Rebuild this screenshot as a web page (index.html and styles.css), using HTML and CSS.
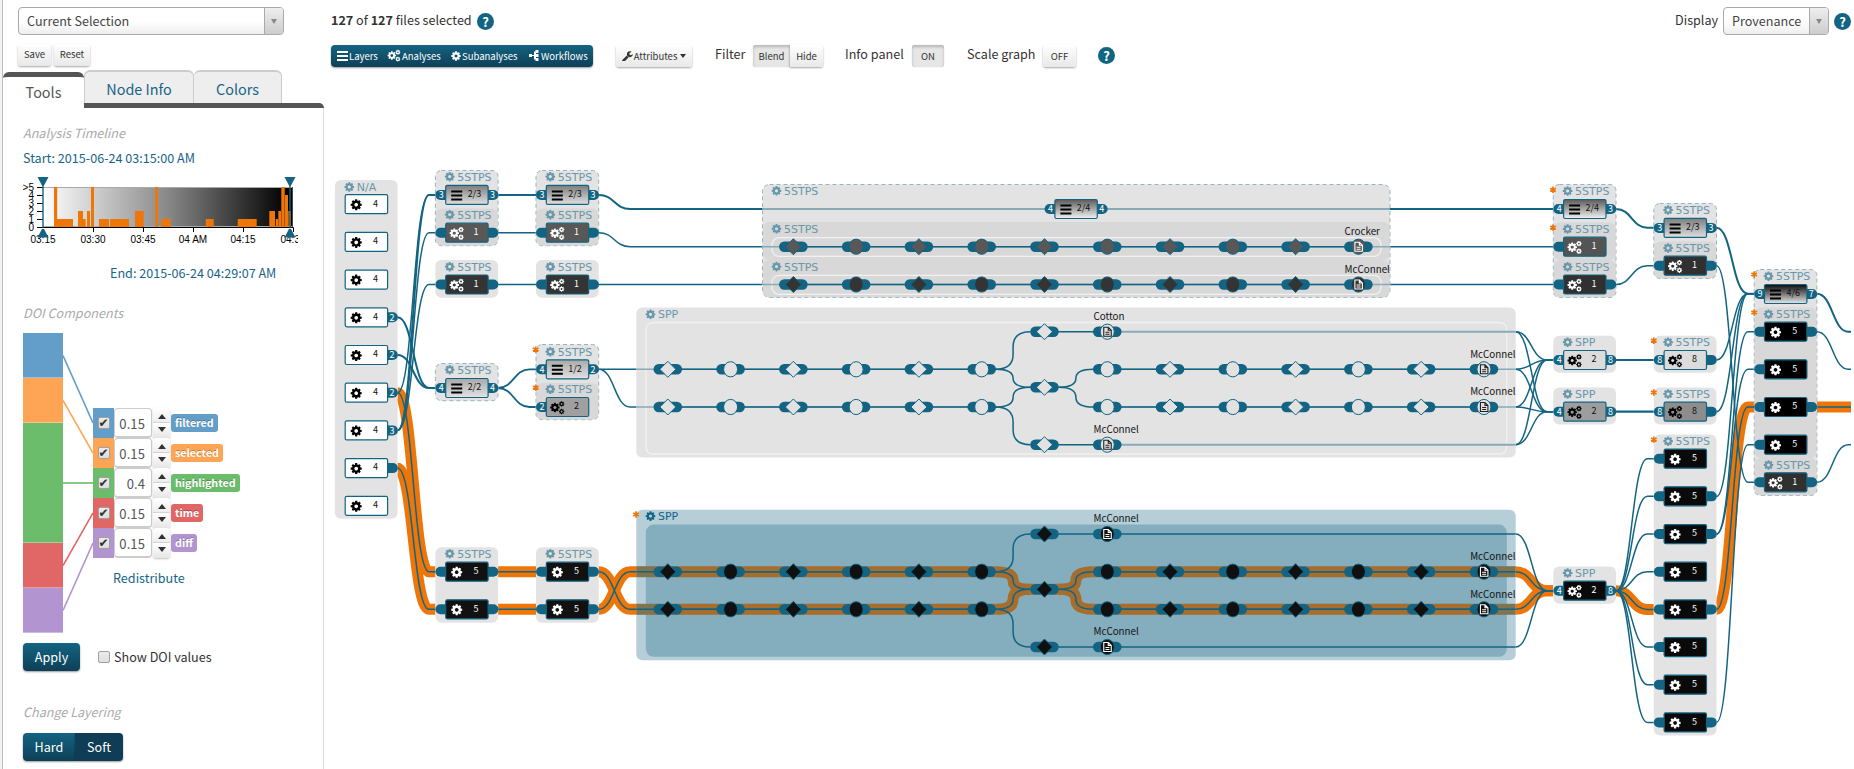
FILE: index.html
```html
<!DOCTYPE html>
<html lang="en">
<head>
<meta charset="utf-8">
<title>Provenance</title>
<link rel="stylesheet" href="styles.css">
</head>
<body>
<svg width="0" height="0" class="defs">
  <defs>
    <path id="cog" fill-rule="evenodd" transform="scale(.000651,-.000651) translate(-768,-640)" d="M1024 640q0 -106 -75 -181t-181 -75t-181 75t-75 181t75 181t181 75t181 -75t75 -181zM1536 749v-222q0 -12 -8 -23t-20 -13l-185 -28q-19 -54 -39 -91q35 -50 107 -138q10 -12 10 -25t-9 -23q-27 -37 -99 -108t-94 -71q-12 0 -26 9l-138 108q-44 -23 -91 -38q-16 -136 -29 -186q-7 -28 -36 -28h-222q-14 0 -24.5 8.5t-11.5 21.5l-28 184q-49 16 -90 37l-141 -107q-10 -9 -25 -9q-14 0 -25 11q-126 114 -165 168q-7 10 -7 23q0 12 8 23q15 21 51 66.5t54 70.5q-27 50 -41 99l-183 27q-13 2 -21 12.5t-8 23.5v222q0 12 8 23t19 13l186 28q14 46 39 92q-40 57 -107 138q-10 12 -10 24q0 10 9 23q26 36 98.5 107.5t94.5 71.5q13 0 26 -10l138 -107q44 23 91 38q16 136 29 186q7 28 36 28h222q14 0 24.5 -8.5t11.5 -21.5l28 -184q49 -16 90 -37l142 107q9 9 24 9q13 0 25 -10q129 -119 165 -170q7 -8 7 -22q0 -12 -8 -23q-15 -21 -51 -66.5t-54 -70.5q26 -50 41 -98l183 -28q13 -2 21 -12.5t8 -23.5z"/>
    <g id="cogs">
      <use href="#cog" transform="translate(-2.4,0) scale(9.4)"/>
      <use href="#cog" transform="translate(4.3,-3.6) scale(5.4)"/>
      <use href="#cog" transform="translate(4.3,4) scale(5.4)"/>
    </g>
    <path id="bars" d="M-5.5-5h11v2h-11zM-5.5-1h11v2h-11zM-5.5 3h11v2h-11z"/>
    <linearGradient id="g23" x2="0" y2="1"><stop offset="0" stop-color="#7d7d7d"/><stop offset="1" stop-color="#e0e0e0"/></linearGradient>
    <linearGradient id="g24" x2="0" y2="1"><stop offset="0" stop-color="#5a5a5a"/><stop offset="1" stop-color="#f2f2f2"/></linearGradient>
    <linearGradient id="g22" x2="0" y2="1"><stop offset="0" stop-color="#a8a8a8"/><stop offset="1" stop-color="#e2e2e2"/></linearGradient>
    <linearGradient id="g46" x2="0" y2="1"><stop offset="0" stop-color="#0a0a0a"/><stop offset="1" stop-color="#e6e6e6"/></linearGradient>
    <linearGradient id="gTime"><stop offset="0" stop-color="#fff"/><stop offset=".5" stop-color="#888"/><stop offset=".95" stop-color="#080808"/><stop offset="1" stop-color="#000"/></linearGradient>
  </defs>
</svg>
<div class="app">
  <aside class="sidebar">
    <div class="select sel-current"><span>Current Selection</span><i class="caret-box"></i></div>
    <div class="row saves"><button class="btn save">Save</button><button class="btn reset">Reset</button></div>
    <nav class="tabs"><a class="tab active">Tools</a><a class="tab info">Node Info</a><a class="tab colors">Colors</a></nav>
    <div class="panel">
      <h4 class="h-timeline">Analysis Timeline</h4>
      <div class="link start">Start: 2015-06-24 03:15:00 AM</div>
      <svg class="timeline" width="275" height="72" viewBox="23 176 275 72"></svg>
      <div class="link end">End: 2015-06-24 04:29:07 AM</div>
      <h4 class="h-doi">DOI Components</h4>
      <div class="doi">
        <div class="stack"><i class="c-filtered"></i><i class="c-selected"></i><i class="c-highlighted big"></i><i class="c-time"></i><i class="c-diff"></i></div>
        <svg class="links" width="30" height="300"><g stroke-width="1.6" fill="none">
          <path stroke="#639ec9" d="M0 22.5L30 90"/><path stroke="#fea555" d="M0 67.5L30 120"/><path stroke="#6bbc6b" d="M0 150H30"/><path stroke="#e16767" d="M0 232.5L30 180"/><path stroke="#b294d0" d="M0 277.5L30 210"/></g></svg>
        <div class="comps">
          <div class="comp"><i class="sw c-filtered"><b class="check ticked"></b></i><span class="num">0.15</span><i class="spin"></i><em class="tag c-filtered">filtered</em></div>
          <div class="comp"><i class="sw c-selected"><b class="check ticked"></b></i><span class="num">0.15</span><i class="spin"></i><em class="tag c-selected">selected</em></div>
          <div class="comp"><i class="sw c-highlighted"><b class="check ticked"></b></i><span class="num">0.4</span><i class="spin"></i><em class="tag c-highlighted">highlighted</em></div>
          <div class="comp"><i class="sw c-time"><b class="check ticked"></b></i><span class="num">0.15</span><i class="spin"></i><em class="tag c-time">time</em></div>
          <div class="comp"><i class="sw c-diff"><b class="check ticked"></b></i><span class="num">0.15</span><i class="spin"></i><em class="tag c-diff">diff</em></div>
          <div class="link redis">Redistribute</div>
        </div>
      </div>
      <div class="row apply-row"><button class="pbtn apply">Apply</button><b class="check"></b><span>Show DOI values</span></div>
      <h4 class="h-layer">Change Layering</h4>
      <div class="row"><button class="pbtn hard">Hard</button><button class="pbtn soft">Soft</button></div>
    </div>
  </aside>
  <main class="main">
    <div class="row top">
      <span class="count"><b>127</b> of <b>127</b> files selected</span><i class="help">?</i>
      <span class="display">Display</span>
      <div class="select sel-prov"><span>Provenance</span><i class="caret-box"></i></div><i class="help h-end">?</i>
    </div>
    <div class="row tools">
      <div class="levels">
        <span class="lv1"><svg width="11" height="10" viewBox="-5.5 -5 11 10"><use href="#bars"/></svg>Layers</span>
        <span class="lv2"><svg width="14" height="13" viewBox="-7 -6.5 14 13"><use href="#cogs" transform="scale(.9)"/></svg>Analyses</span>
        <span class="lv3"><svg width="10" height="10" viewBox="-5 -5 10 10"><use href="#cog" transform="scale(9.4)"/></svg>Subanalyses</span>
        <span class="lv4"><svg width="11" height="11" viewBox="0 0 11 11"><path d="M0 4h3v3H0zM3 5h3v1H3zM5 1.5h2v8H5zM6.5 0H9.5v3H6.5zM6.5 4H9.5v3H6.5zM6.5 8H9.5v3H6.5z"/></svg>Workflows</span>
      </div>
      <button class="btn attr"><svg width="11" height="11" viewBox="0 -1536 1664 1664"><path transform="scale(1,-1)" d="M1018 428l-682 -682q-37 -37 -90 -37q-52 0 -91 37l-106 108q-38 36 -38 90q0 53 38 91l681 681q39 -98 114.500 -173.500t173.500 -114.500zM1634 863q0 -39 -23 -106q-47 -134 -164.500 -217.500t-258.500 -83.500q-185 0 -316.500 131.500t-131.500 316.500t131.500 316.500t316.500 131.500q58 0 121.500 -16.500t107.500 -46.500q16 -11 16 -28t-16 -28l-293 -169v-224l193 -107q5 3 79 48.500t135.500 81t70.500 35.500q15 0 23.500 -10t8.500 -25z"/></svg>Attributes<i class="down"></i></button>
      <span class="t-filter">Filter</span><button class="btn blend pressed">Blend</button><button class="btn hide">Hide</button>
      <span class="t-info">Info panel</span><button class="btn on pressed">ON</button>
      <span class="t-scale">Scale graph</span><button class="btn off">OFF</button>
      <i class="help h-tools">?</i>
    </div>
    <svg class="graph" width="1527" height="689" viewBox="324 80 1527 689"></svg>
  </main>
</div>
<script src="graph.js"></script>
</body>
</html>
```

FILE: styles.css
```css
* { box-sizing: border-box; }
body { margin: 0; background: #fff; color: #333; font: 12.6px/18px "Noto Sans CJK JP", "Noto Sans", sans-serif; overflow: hidden; }
.defs { position: absolute; }
.app { display: flex; width: 1854px; height: 769px; background: linear-gradient(90deg, #f3f3f3 0 2px, #bbb 2px 3px, #fff 3px); }
.sidebar { width: 324px; height: 769px; padding: 7px 0 0 3px; display: flex; flex-direction: column; }
.row { display: flex; align-items: center; }
i, em { font-style: normal; }
button { font-family: inherit; padding: 0; margin: 0; border: 0; }
.select { display: flex; height: 28px; border: 1px solid #aaa; border-radius: 4px; background: linear-gradient(#fff 50%, #eee); color: #444; line-height: 25px; flex: none; }
.select span { flex: 1; padding-left: 8px; white-space: nowrap; }
.caret-box { width: 19px; border-left: 1px solid #aaa; border-radius: 0 3px 3px 0; background: linear-gradient(#eee, #ccc); display: flex; align-items: center; justify-content: center; }
.caret-box::before { content: ""; border: 3px solid transparent; border-top: 5px solid #888; border-bottom: 0; }
.sel-current { width: 266px; margin-left: 15px; }
.saves { margin: 8px 0 0 15px; gap: 3px; height: 23px; }
.btn { height: 22px; border-radius: 3px; background: linear-gradient(#fff, #e8e8e8); box-shadow: 0 1px 2px rgba(0,0,0,.35); color: #333; font-size: 9.5px; line-height: 20px; text-align: center; flex: none; white-space: nowrap; }
.btn.pressed { background: #e6e6e6; box-shadow: inset 0 2px 3px rgba(0,0,0,.2), 0 0 1px rgba(0,0,0,.3); }
.saves .btn { padding-bottom: 2px; }
.save { width: 33px; } .reset { width: 36px; }
.tabs { display: flex; height: 42px; align-items: flex-end; position: relative; }
.tabs::after { content: ""; position: absolute; left: 81px; top: 37px; width: 240px; height: 5px; background: #555; border-radius: 0 5px 0 0; }
.tab { font-size: 14.4px; text-align: center; color: #186487; background: #eee; border: 1px solid #ccc; border-bottom: 0; border-top-width: 2px; border-radius: 6px 6px 0 0; height: 33px; margin-bottom: 5px; line-height: 33px; }
.tab.active { width: 81px; height: 36px; margin-bottom: 0; background: #fff; border: 0; border-top: 5px solid #555; color: #555; line-height: 29px; }
.tab.info { width: 110px; } .tab.colors { width: 88px; border-left: 0; }
.panel { width: 321px; flex: 1; border-right: 1px solid #ddd; padding-left: 20px; }
h4 { margin: 0; font-size: 12.6px; font-weight: 400; font-style: italic; color: #aaa; line-height: 18px; }
.h-timeline { padding-top: 16px; }
.link { color: #186487; }
.start { margin-top: 7px; }
.timeline { display: block; margin-top: 8px; }
.end { margin-top: 17px; padding-left: 87px; }
.h-doi { margin-top: 22px; }
.doi { display: flex; margin-top: 11px; height: 300px; }
.stack { width: 40px; display: flex; flex-direction: column; }
.stack i { height: 45px; border-bottom: 1px solid rgba(255,255,255,.35); }
.stack .big { height: 120px; }
.c-filtered { background: #639ec9; } .c-selected { background: #fea555; } .c-highlighted { background: #6bbc6b; } .c-time { background: #e16767; } .c-diff { background: #b294d0; }
.comps { padding-top: 75px; }
.comp { display: flex; height: 30px; align-items: center; }
.sw { width: 21px; height: 30px; display: flex; align-items: center; justify-content: center; }
.check { width: 12px; height: 12px; border: 1px solid #a0a0a0; border-radius: 2px; background: linear-gradient(#ececec, #ddd); display: block; flex: none; }
.check.ticked::before { content: "✔"; display: block; font: 12px/10px "DejaVu Sans", sans-serif; color: #333; margin-left: 0; }
.num { width: 38px; height: 30px; border: 1px solid #ccc; border-bottom-width: 2px; border-radius: 4px; background: #fff; text-align: right; padding-right: 6px; line-height: 29px; font-size: 13px; color: #555; letter-spacing: .1px; }
.spin { width: 17px; height: 30px; margin: 0 1px; border-radius: 3px; box-shadow: 0 1px 2px rgba(0,0,0,.25); background: linear-gradient(#fff, #eee 46%, #ccc 48%, #fff 50%, #e6e6e6); display: flex; flex-direction: column; align-items: center; justify-content: center; gap: 8px; }
.spin::before, .spin::after { content: ""; border: 4px solid transparent; border-top: 0; border-bottom: 5px solid #333; }
.spin::after { border-top: 5px solid #333; border-bottom: 0; }
.tag { height: 18px; padding: 0 4px; border-radius: 3px; color: #fff; font-weight: 700; font-size: 10.7px; line-height: 17px; text-shadow: 0 -1px 0 rgba(0,0,0,.25); }
.redis { padding: 11px 0 0 20px; }
.pbtn { height: 28px; color: #fff; font-size: 12.6px; line-height: 28px; background: linear-gradient(#136482, #0e3f57); box-shadow: 0 1px 2px rgba(0,0,0,.4); }
.apply-row { margin-top: 10px; }
.apply { width: 57px; border-radius: 4px; margin-right: 18px; }
.apply-row span { margin-left: 4px; }
.h-layer { margin: 32px 0 12px; }
.hard { width: 52px; border-radius: 4px 0 0 4px; }
.soft { width: 48px; border-radius: 0 4px 4px 0; background: #0f3d56; }
.main { width: 1530px; }
.top { height: 42px; padding-left: 7px; }
.top > span { white-space: nowrap; line-height: 18px; margin-top: -2px; }
.count { width: 146px; }
.help { width: 17px; height: 17px; border-radius: 50%; background: #136482; color: #fff; font-weight: 700; font-size: 13px; line-height: 17px; text-align: center; flex: none; }
.display { width: 48px; margin-left: 1181px; }
.sel-prov { width: 106px; }
.sel-prov + .help { margin-left: 5px; }
.tools { height: 27px; padding: 0 0 0 7px; margin-bottom: 11px; }
.tools > span { line-height: 18px; white-space: nowrap; margin-top: -4px; flex: none; }
.levels { width: 262px; height: 22px; border-radius: 4px; background: linear-gradient(#136482, #0e3f57); box-shadow: 0 1px 2px rgba(0,0,0,.4); display: flex; color: #fff; font-size: 9.5px; line-height: 20px; flex: none; }
.levels span { display: flex; align-items: center; gap: 1px; padding-left: 6px; white-space: nowrap; }
.levels svg { fill: #fff; flex: none; }
.lv1 { width: 50px; } .lv2 { width: 64px; } .lv3 { width: 78px; } .lv4 { width: 70px; }
.attr { width: 76px; margin-left: 23px; display: flex; align-items: center; justify-content: center; gap: 1px; }
.attr svg { fill: #333; }
.down { border: 3.5px solid transparent; border-top: 4px solid #333; border-bottom: 0; margin-left: 2px; }
.t-filter { width: 38px; margin-left: 23px; }
.blend { width: 37px; border-radius: 3px 0 0 3px; } .hide { width: 33px; border-radius: 0 3px 3px 0; }
.t-info { width: 67px; margin-left: 22px; } .on { width: 32px; }
.t-scale { width: 76px; margin-left: 23px; } .off { width: 33px; }
.h-tools { margin-left: 22px; }
.graph { display: block; }
.graph .lbl { font: 11px "DejaVu Sans", sans-serif; fill: #6797ab; }
.graph .sel { fill: #136482; }
.graph .cnt { font-size: 9px; text-anchor: middle; }
.graph .port { font-size: 9px; fill: #fff; text-anchor: middle; }
.graph .name { font-size: 9.8px; fill: #111; }
.timeline text { font: 10px "Liberation Sans", sans-serif; fill: #000; }
```

FILE: graph.js
```js
const TEAL = '#136482', ORANGE = '#ee7608', FAINT = '#88aab8';
const out = [];
const put = s => out.push(s);
const C = { a: 334.9, b: 435.4, c: 536, x: 1553.3, y: 1653.8, z: 1754.2 };
const W = 62.7;

function link(x0, y0, x1, y1, w) {
  const m = x0 + 15.7, e = Math.min(x0 + 31.4, x1);
  return { d: `M${x0} ${y0}C${m} ${y0} ${m} ${y1} ${e} ${y1}H${x1}`, w: w || 1.5 };
}
const R = c => c + W;
const edges = [
  link(R(C.a), 317.3, C.b, 388, 2), link(R(C.a), 355, C.b, 388, 2),
  link(R(C.a), 430.3, C.b, 194.9, 2), link(R(C.a), 430.3, C.b, 232.7), link(R(C.a), 430.3, C.b, 284.5),
  link(R(C.a), 392.7, C.b, 194.9),
  link(R(C.b), 194.9, C.c, 194.9, 2), link(R(C.b), 232.7, C.c, 232.7), link(R(C.b), 284.5, C.c, 284.5),
  link(R(C.b), 388, C.c, 369.3, 1.8), link(R(C.b), 388, C.c, 407, 1.8),
  link(R(C.c), 194.9, 1553, 209, 2), link(R(C.c), 232.7, 1553, 246.7), link(R(C.c), 284.5, 1553, 284.5),
  link(R(C.c), 369.3, 660, 369.3), link(R(C.c), 369.3, 660, 407),
  link(R(C.x), 209, C.y, 227.7, 2), link(R(C.x), 284.5, C.y, 265.7),
  link(R(C.x), 360, C.y, 360, 2), link(R(C.x), 411.7, C.y, 411.7, 2.2),
  link(R(C.y), 227.7, C.z, 293.7, 2), link(R(C.y), 265.7, C.z, 482.3),
  link(R(C.y), 360, C.z, 293.7), link(R(C.y), 411.7, C.z, 293.7),
  link(R(C.y), 496.5, C.z, 293.7), link(R(C.y), 534.2, C.z, 331.7), link(R(C.y), 534.2, C.z, 369.3),
  link(R(C.y), 722.4, C.z, 444.7),
  link(R(C.z), 293.7, 1851, 331.7, 2), link(R(C.z), 331.7, 1851, 369.3), link(R(C.z), 482.3, 1851, 444.7)
];
for (const y of [331.7, 369.3, 407, 444.7]) {
  for (const t of [360, 411.7]) edges.push(link(1515.7, y, 1553, t));
}
for (const y of [534, 647]) edges.push(link(1515.7, y, 1553, 590.7));
for (let i = 0; i < 8; i++) if (i !== 4) edges.push(link(R(C.x), 590.7, C.y, 458.7 + 37.67 * i));
const hot = [
  link(R(C.a), 392.7, C.b, 571.7), link(R(C.a), 468.3, C.b, 609.3),
  link(R(C.b), 571.7, C.c, 571.7), link(R(C.b), 609.3, C.c, 609.3),
  link(R(C.c), 571.7, 637, 609.3), link(R(C.c), 609.3, 637, 571.7),
  link(1515.7, 571.7, 1553, 590.7), link(1515.7, 609.3, 1553, 590.7),
  link(R(C.x), 590.7, C.y, 609.4), link(R(C.y), 609.4, C.z, 407), link(R(C.z), 407, 1851, 407)
];
hot.forEach(e => put(`<path d="${e.d}" fill="none" stroke="${ORANGE}" stroke-width="11"/>`));
edges.concat(hot).forEach(e => put(`<path d="${e.d}" fill="none" stroke="${TEAL}" stroke-width="${e.w}"/>`));

function box(x, y0, y1, w, fill, dashed, r) {
  put(`<rect x="${x}" y="${y0}" width="${w}" height="${y1 - y0}" rx="${r || 6}" fill="${fill}"${dashed ? ' stroke="#97b4c0" stroke-dasharray="4 3"' : ''}/>`);
}
function label(x, y, t, cls) {
  put(`<use href="#cog" fill="${cls ? TEAL : '#6797ab'}" transform="translate(${x},${y}) scale(9.6)"/><text class="lbl ${cls || ''}" x="${x + 7.5}" y="${y + 4}">${t}</text>`);
}
function star(x, y) {
  put(`<path d="M${x} ${y - 3.2}v6.400M${x - 2.8} ${y - 1.600}l5.600 3.200M${x + 2.8} ${y - 1.600}l-5.600 3.200" stroke="${ORANGE}" stroke-width="1.7"/>`);
}
// l / r: false for no port, '' for an unlabelled port, otherwise the port count
function node(c, y, icon, txt, fill, l, r) {
  const dark = fill[0] === '#' && parseInt(fill.slice(1, 3), 16) < 110;
  const port = (px, t, d) => {
    put(`<path d="M${px} ${y - 5}h${d * -5.500}a5 5 0 0 ${d > 0 ? 0 : 1} 0 10h${d * 5.500}z" fill="${TEAL}"/>`);
    if (t) put(`<text class="port" x="${px - d * 4.6}" y="${y + 3.3}">${t}</text>`);
  };
  if (l !== false) port(c + 10.5, l, 1);
  if (r !== false) port(c + 52.5, r, -1);
  put(`<rect x="${c + 10.3}" y="${y - 9.5}" width="42.4" height="19" rx="1.500" fill="${fill}" stroke="${TEAL}" stroke-width="1.2"/>`);
  const ink = dark ? '#fff' : '#000';
  const sc = icon === 'cog' ? ' scale(11)' : '';
  put(`<use href="#${icon}" fill="${ink}" transform="translate(${c + 21.3},${y + 0.5})${sc}"/>`);
  put(`<text class="cnt" fill="${dark ? '#fff' : '#111'}" x="${c + (txt.length > 1 ? 39 : 40.6)}" y="${y + 2.300}">${txt}</text>`);
}
const G = '#e3e3e3', D = '#d8d8d8';

box(C.a, 180, 518.7, W, G); label(349.3, 187, 'N/A');
['', '', '', '2', '2', '2', '3', '', ''].forEach((p, i) => {
  node(C.a, 204.2 + 37.7 * i, 'cog', '4', 'white', false, i < 3 || i === 8 ? false : p);
});
for (const c of [C.b, C.c]) {
  box(c, 170.5, 245.7, W, G, true); box(c + .5, 208.5, 245.4, W - 1, D);
  label(c + 14.3, 176.7, '5STPS'); label(c + 14.3, 214.7, '5STPS');
  node(c, 194.9, 'bars', '2/3', 'url(#g23)', '3', '3');
  node(c, 232.7, 'cogs', '1', '#585858', '', '');
  box(c, 260, 297.7, W, G); label(c + 14.3, 266.7, '5STPS');
  node(c, 284.5, 'cogs', '1', '#343434', '', '');
  box(c, 547.3, 622.7, W, G); label(c + 14.3, 553.7, '5STPS');
  node(c, 571.7, 'cog', '5', '#111111', '', ''); node(c, 609.3, 'cog', '5', '#111111', '', '');
}
box(C.b, 363.5, 400.7, W, G, true); label(C.b + 14.3, 369.7, '5STPS');
node(C.b, 388, 'bars', '2/2', 'url(#g22)', '4', '4');
box(C.c, 344.5, 419.7, W, G, true); box(C.c + .5, 383, 419.4, W - 1, D);
label(C.c + 14.3, 351.7, '5STPS'); label(C.c + 14.3, 389.2, '5STPS');
node(C.c, 369.3, 'bars', '1/2', 'url(#g22)', '4', '2');
node(C.c, 407, 'cogs', '2', '#a0a0a0', '2', false);
star(535.7, 349.6); star(535.7, 387.6);

// workflow boxes
const X = i => 667.8 + 62.78 * i;
const ln = (x0, x1, y, s, w) => put(`<path d="M${x0} ${y}H${x1}" stroke="${s}" stroke-width="${w}"/>`);
function task(i, y, kind, fill, txt) {
  const x = X(i), edge = `stroke="${TEAL}" stroke-width="1"`;
  put(`<rect x="${x - 14.3}" y="${y - 5.2}" width="28.6" height="10.4" rx="5.200" fill="${TEAL}"/>`);
  if (kind === 'd') put(`<path d="M${x} ${y - 8}l8 8l-8 8l-8 -8z" fill="${fill}" ${edge}/>`);
  else put(`<ellipse cx="${x}" cy="${y}" rx="7" ry="7.600" fill="${fill}" ${edge}/>`);
  if (kind === 'f') {
    const k = fill === '#e2e2e2' ? '#222' : '#fff';
    put(`<path d="M${x - 3.5} ${y - 4.500}h4.500l3 3v6h-7.500zM${x + 1} ${y - 4.500}v3h3M${x - 1.8} ${y + .5}h4M${x - 1.8} ${y + 2.500}h4" fill="none" stroke="${k}" stroke-width="1.100"/>`);
    put(`<text class="name" x="${x - 13.8}" y="${y - 11.8}">${txt}</text>`);
  }
}
function inner(x0, y0, x1, y1) {
  put(`<rect x="${x0}" y="${y0}" width="${x1 - x0}" height="${y1 - y0}" rx="7" fill="none" stroke="#f1f1f1" stroke-width="1.300"/>`);
}
box(762.5, 184.5, 297.500, 627.500, G, true, 7);
box(763, 222, 260, 626.5, D, false, 6); box(763, 260, 297.2, 626.5, D, false, 6);
label(776.5, 190.8, '5STPS'); label(776.5, 228.800, '5STPS'); label(776.5, 266.6, '5STPS');
inner(772, 237.7, 1381, 256.4); inner(772, 275.3, 1381, 294.3);
ln(763, 1045, 209, FAINT, 2); ln(1107, 1390, 209, FAINT, 2);
node(1044.6, 209, 'bars', '2/4', 'url(#g24)', '4', '4');
[[246.7, '#585858', 'Crocker'], [284.5, '#343434', 'McConnel']].forEach(([y, f, t]) => {
  ln(763, 1390, y, FAINT, 1.5); ln(X(2), X(11), y, TEAL, 1.5);
  for (let i = 2; i <= 11; i++) task(i, y, i === 11 ? 'f' : i % 2 ? 'c' : 'd', f, t);
});

function branch(x0, y0, x1, y1) {
  const m = (x0 + x1) / 2, s = Math.sign(y1 - y0), r = Math.min(Math.abs(y1 - y0) / 2, 15);
  return `M${x0} ${y0}Q${m} ${y0} ${m} ${y0 + s * r}V${y1 - s * r}Q${m} ${y1} ${x1} ${y1}`;
}
function spp(b, t, m, lo, bot, sel) {
  const f = sel ? '#101010' : '#e2e2e2', band = '#a76d2c', dull = '#7f7350';
  const a = X(5) + 14, d = X(6) - 14, e = X(6) + 14, g = X(7) - 14;
  const main = [branch(a, t, d, m), branch(a, lo, d, m), branch(e, m, g, t), branch(e, m, g, lo)];
  if (sel) {
    for (const y of [t, lo]) {
      ln(636.3, 654, y, dull, 11); ln(1497, 1515.7, y, dull, 11);
      ln(654, a, y, band, 11); ln(g, 1497, y, band, 11);
    }
    ln(d, e, m, band, 11);
    main.forEach(p => put(`<path d="${p}" fill="none" stroke="${band}" stroke-width="11"/>`));
  }
  for (const y of [t, lo]) {
    ln(636.3, a, y, sel ? TEAL : FAINT, 1.5); ln(g, 1515.7, y, sel ? TEAL : FAINT, 1.5);
    ln(654, a, y, TEAL, 1.5); ln(g, 1497, y, TEAL, 1.5);
  }
  main.concat([branch(a, t, d, b), branch(a, lo, d, bot)]).forEach(p => put(`<path d="${p}" fill="none" stroke="${TEAL}" stroke-width="1.500"/>`));
  for (const y of [b, bot]) {
    ln(X(6), X(7), y, TEAL, 1.5); ln(X(7), 1515.7, y, sel ? TEAL : FAINT, sel ? 1.6 : 2);
    task(6, y, 'd', f); task(7, y, 'f', f, !sel && y === b ? 'Cotton' : 'McConnel');
  }
  task(6, m, 'd', f);
  for (const y of [t, lo]) for (let i = 0; i < 14; i++) {
    if (i !== 6) task(i, y, i === 13 ? 'f' : i % 2 ? 'c' : 'd', f, 'McConnel');
  }
}
box(636.3, 307.5, 457.500, 879.4, G); inner(646, 322.500, 1506.700, 454);
label(650.500, 314.300, 'SPP');
spp(331.7, 369.3, 387.3, 407, 444.7, false);
box(636.3, 509.8, 660.2, 879.4, '#b6ced8'); box(645.8, 524.600, 656.800, 861, '#84adbd', false, 8);
label(650.500, 516.100, 'SPP', 'sel'); star(636, 514.500);
spp(534, 571.7, 589.3, 609.3, 647, true);

// right-hand columns
box(C.x, 184.5, 297.5, W, G, true); box(C.x + .5, 222.5, 260, W - 1, D); box(C.x + .5, 260, 297.200, W - 1, D);
[191, 229, 266.800].forEach(y => label(C.x + 14.3, y, '5STPS'));
node(C.x, 209, 'bars', '2/4', 'url(#g24)', '4', '3');
node(C.x, 246.7, 'cogs', '1', '#545454', '', false); node(C.x, 284.5, 'cogs', '1', '#303030', '', '');
star(1553, 189.8); star(1553, 227.600);
box(C.y, 203.5, 278.500, W, G, true); box(C.y + .5, 241.5, 278.200, W - 1, D);
label(C.y + 14.3, 210, '5STPS'); label(C.y + 14.3, 248, '5STPS');
node(C.y, 227.9, 'bars', '2/3', 'url(#g23)', '3', '3'); node(C.y, 265.7, 'cogs', '1', '#303030', '', '');
[[335.700, 360, '#dcdcdc'], [387.500, 411.7, '#9d9d9d']].forEach(([y, n, f], i) => {
  box(C.x, y, y + 37, W, G); label(C.x + 14.3, y + 6.500, 'SPP'); node(C.x, n, 'cogs', '2', f, '4', '8');
  box(C.y, y, y + 37, W, G); label(C.y + 14.3, y + 6.500, '5STPS'); node(C.y, n, 'cogs', '8', i ? '#8d8d8d' : f, '8', '');
  star(C.y, y + 5);
});
box(C.x, 566.5, 603.700, W, G); label(C.x + 14.3, 573, 'SPP'); node(C.x, 590.7, 'cogs', '2', '#0a0a0a', '4', '8');
box(C.y, 434.5, 735.5, W, G); label(C.y + 14.3, 441.200, '5STPS'); star(C.y, 439.600);
for (let i = 0; i < 8; i++) node(C.y, 458.7 + 37.67 * i, 'cog', '5', '#0a0a0a', '', [1, 2, 4, 7].includes(i) ? '' : false);
box(C.z, 269.5, 495.500, W, G, true); box(C.z + .5, 307.5, 458, W - 1, D); box(C.z + .5, 458, 495.200, W - 1, D);
[276.200, 314.200, 465].forEach(y => label(C.z + 14.3, y, '5STPS'));
node(C.z, 294, 'bars', '4/6', 'url(#g46)', '9', '7');
[331.7, 369.3, 407, 444.7].forEach((y, i) => node(C.z, y, 'cog', '5', '#000000', '', i % 2 ? false : ''));
node(C.z, 482.3, 'cogs', '1', '#303030', '', '');
star(C.z, 274.500); star(C.z, 312.500);
document.querySelector('.graph').innerHTML = out.join('');

// timeline
const bars = [[54, 57.2, 5], [57, 73, 1], [78, 83, 2], [83, 85.7, 1], [87, 90, 2], [91, 94, 5], [99, 109, 1], [110, 129, 1], [135, 143.7, 2], [155.3, 158, 5], [161.3, 170.7, 1], [205.7, 213.7, 1], [237.7, 256.7, 1], [269.3, 275, 2], [275.7, 278, 1], [278.3, 281, 2], [281.3, 284.7, 5], [285, 288, 4], [288.3, 291, 2]];
let t = '<rect x="43" y="188" width="250" height="40" fill="url(#gTime)"/><path d="M43 188.500H293M43 227.500H293" stroke="#aaa"/><path d="M292.500 188V228" stroke="#444"/>';
bars.forEach(([a, b, h]) => { t += `<rect x="${a}" y="${228 - 8 * h}" width="${b - a}" height="${8 * h}" fill="${ORANGE}"/>`; });
t += '<path d="M43 228.500H293.500V233M93.500 228v5M143.500 228v5M193.500 228v5M243.500 228v5M37 188.500h6M37 196.500h6M37 204.500h6M37 212.500h6M37 220.500h6M37 228.500h6" fill="none" stroke="#000"/>';
['0', '1', '2', '3', '4', '>5'].forEach((s, i) => { t += `<text x="34" y="${231.6 - 8 * i}" text-anchor="end">${s}</text>`; });
['03:15', '03:30', '03:45', '04 AM', '04:15', '04:30'].forEach((s, i) => { t += `<text x="${43 + 50 * i}" y="244" text-anchor="middle">${s}</text>`; });
for (const x of [43, 290]) t += `<path d="M${x - 5.5} 178h11l-5.500 10.500zM${x - 5.5} 238.500h11l-5.500 -10.500zM${x - .7} 186h1.400v44h-1.400z" fill="${TEAL}"/>`;
document.querySelector('.timeline').innerHTML = t;
```
